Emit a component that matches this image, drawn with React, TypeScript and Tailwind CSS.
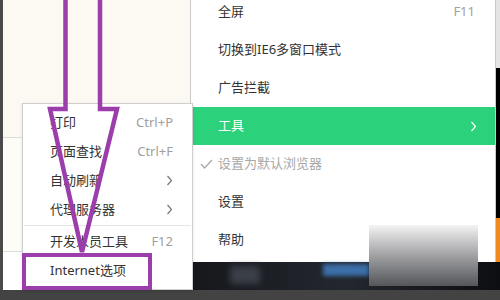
const font = { fontFamily: '"Noto Sans", "Noto Sans CJK SC", sans-serif' };

function Chevron({ className }: { className?: string }) {
  return (
    <svg width="7" height="11" viewBox="0 0 7 11" className={className}>
      <polyline points="1.5,1 5.5,5.5 1.5,10" fill="none" stroke="currentColor" strokeWidth="1.2" />
    </svg>
  );
}

const mainItems = [
  { label: '全屏', key: 'F11' },
  { label: '切换到IE6多窗口模式' },
  { label: '广告拦截' },
  { label: '工具', active: true },
  { label: '设置为默认浏览器', checked: true },
  { label: '设置' },
  { label: '帮助' },
];

const subItems = [
  { label: '打印', key: 'Ctrl+P' },
  { label: '页面查找', key: 'Ctrl+F' },
  { label: '自动刷新', more: true },
  { label: '代理服务器', more: true },
  { sep: true },
  { label: '开发人员工具', key: 'F12' },
  { label: 'Internet选项' },
];

export default function App() {
  return (
    <div className="relative w-[500px] h-[300px] overflow-hidden bg-white text-[13px]" style={font}>
      <div className="flex h-[290px]">
        {/* left window background */}
        <div className="flex w-[190px]">
          <div className="w-[3px] bg-[#4a4a4a]" />
          <div className="flex flex-1 flex-col">
            <div className="h-[138px] bg-[#fbf9f1] border-b border-[#dedbd0]" />
            <div className="h-[114px] bg-[#fdfcf7] border-b border-[#dcdcdc]" />
            <div className="flex-1 bg-white" />
          </div>
        </div>

        {/* main menu */}
        <div className="flex w-[310px] flex-col">
          <div className="flex h-[262px]">
            <div className="w-[306px] overflow-hidden border-l border-r border-[#c9c9c9] bg-white">
              <div className="-mt-[7px] flex flex-col">
                {mainItems.map((it) => (
                  <div
                    key={it.label}
                    className={
                      'relative flex h-[38px] items-center justify-between pl-[27px] pr-[20px] ' +
                      (it.active ? 'bg-[#2bd17b] text-white' : it.checked ? 'text-[#a8a8a8]' : 'text-[#333]')
                    }
                  >
                    {it.checked && (
                      <svg width="13" height="10" viewBox="0 0 13 10" className="absolute left-[9px] top-[14px]">
                        <polyline points="1,5 4.5,9 12,1" fill="none" stroke="#a8a8a8" strokeWidth="1.3" />
                      </svg>
                    )}
                    <span>{it.label}</span>
                    {it.key && <span className="text-[#a0a0a0]">{it.key}</span>}
                    {it.active && <Chevron className="mr-[-2px] text-white" />}
                  </div>
                ))}
              </div>
            </div>
            <div className="flex w-[4px] flex-col">
              <div className="h-[68px] bg-[#e4e4e4]" />
              <div className="h-[150px] bg-black" />
              <div className="flex-1 bg-[#f0891e]" />
            </div>
          </div>
          <div className="relative flex-1 bg-gradient-to-r from-[#15171b] via-[#23272e] to-[#0d0e11]">
            <div className="absolute left-[133px] top-[2px] h-[12px] w-[46px] bg-[#3c6fa8] blur-[2px]" />
            <div className="absolute left-[40px] top-[4px] h-[18px] w-[30px] bg-[#3a3f48] blur-[3px]" />
          </div>
        </div>
      </div>
      <div className="h-[10px] bg-[#434343]" />

      {/* blurred grey box */}
      <div className="absolute left-[369px] top-[225px] h-[61px] w-[109px] bg-gradient-to-b from-[#f4f4f4] to-[#55565a]" />

      {/* sub menu */}
      <div className="absolute left-[22px] top-[103px] h-[187px] w-[171px] border border-[#cfcfcf] bg-white pt-[4px] text-[#333] shadow-sm">
        {subItems.map((it, i) =>
          it.sep ? (
            <div key={i} className="mx-[1px] my-[1px] h-px bg-[#e6e6e6]" />
          ) : (
            <div key={i} className="flex h-[29px] items-center justify-between pl-[27px] pr-[19px]">
              <span>{it.label}</span>
              {it.key && <span className="text-[#a0a0a0]">{it.key}</span>}
              {it.more && <Chevron className="text-[#777]" />}
            </div>
          )
        )}
      </div>

      {/* annotation */}
      <svg className="pointer-events-none absolute inset-0" width="500" height="300" viewBox="0 0 500 300">
        <polyline
          points="65.5,-5 65.5,109 50,109 82,252 117,109 100,109 100,-5"
          fill="none"
          stroke="#9b3dab"
          strokeWidth="4.5"
          strokeLinejoin="miter"
        />
        <rect x="24" y="255" width="126" height="33" fill="none" stroke="#9b3dab" strokeWidth="4" />
      </svg>
    </div>
  );
}
